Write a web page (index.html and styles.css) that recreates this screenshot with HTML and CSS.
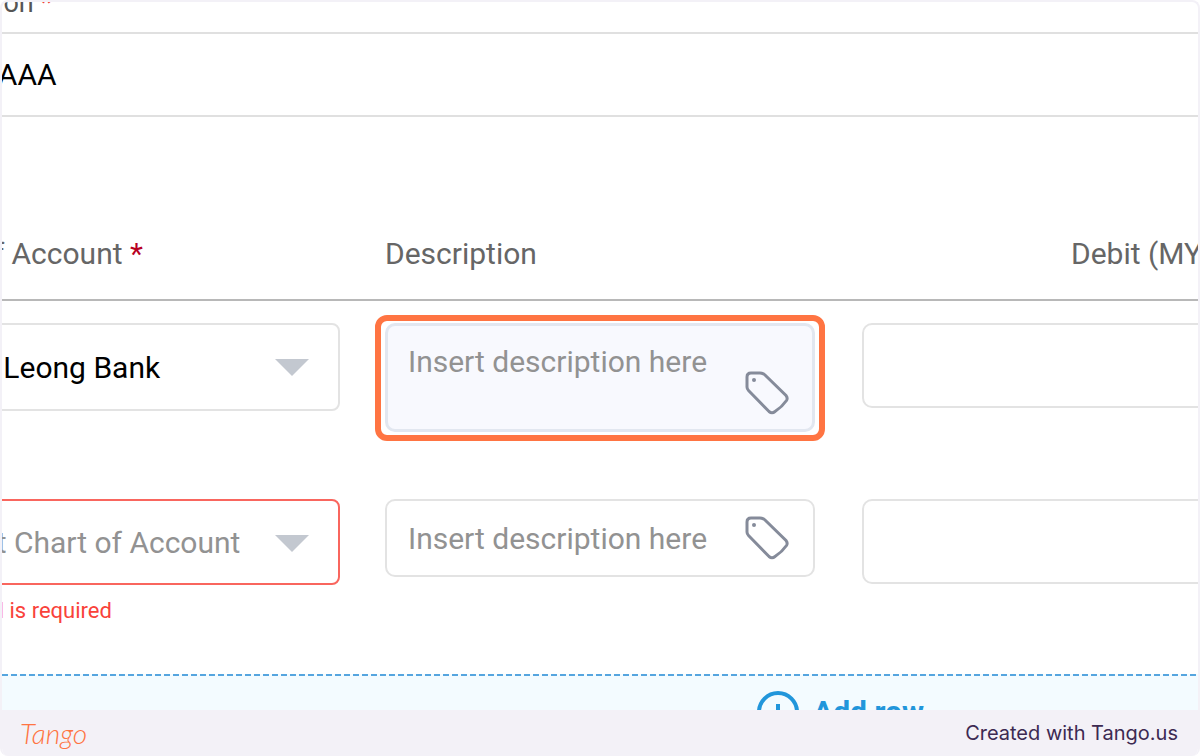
FILE: index.html
```html
<!DOCTYPE html>
<html lang="en">
<head>
    <meta charset="UTF-8" />
    <title>Journal entry</title>
    <link rel="stylesheet" href="styles.css">
</head>
<body>
    <div class="frame">
        <main class="sheet">
            <div class="top-field">
                <label for="topDescription">Description <span class="star">*</span></label>
                <input type="text" id="topDescription" value="AAAAAAAA" />
            </div>

            <table class="entries">
                <thead>
                    <tr>
                        <th class="col-account">Chart of Account <span class="star">*</span></th>
                        <th class="col-description">Description</th>
                        <th class="col-debit">Debit (MYR)</th>
                    </tr>
                </thead>
                <tbody>
                    <tr>
                        <td>
                            <div class="select-box tall">
                                <select aria-label="Chart of Account, row 1">
                                    <option>Hong Leong Bank</option>
                                </select>
                                <svg class="caret" viewBox="0 0 34 17"><path d="M0 0h34L17 17z" /></svg>
                            </div>
                        </td>
                        <td>
                            <div class="note active">
                                <textarea rows="2" aria-label="Description, row 1" placeholder="Insert description here"></textarea>
                                <svg class="tag" viewBox="0 0 44 44"><path d="M6 2Q2 2 2 6V16Q2 18 3.500 19.500L24 40.500Q27 43 30 40.500Q37 36 41.500 29.500Q43 27 41 24.500L20 4Q18 2 15 2Z" /><circle cx="9" cy="9" r="2" /></svg>
                                <span class="highlight"></span>
                            </div>
                        </td>
                        <td>
                            <input type="text" class="amount" aria-label="Debit, row 1" />
                        </td>
                    </tr>
                    <tr>
                        <td>
                            <div class="select-box invalid">
                                <select aria-label="Chart of Account, row 2">
                                    <option>Select Chart of Account</option>
                                </select>
                                <svg class="caret" viewBox="0 0 34 17"><path d="M0 0h34L17 17z" /></svg>
                            </div>
                            <p class="error">This field is required</p>
                        </td>
                        <td>
                            <div class="note">
                                <textarea rows="1" aria-label="Description, row 2" placeholder="Insert description here"></textarea>
                                <svg class="tag" viewBox="0 0 44 44"><path d="M6 2Q2 2 2 6V16Q2 18 3.500 19.500L24 40.500Q27 43 30 40.500Q37 36 41.500 29.500Q43 27 41 24.500L20 4Q18 2 15 2Z" /><circle cx="9" cy="9" r="2" /></svg>
                            </div>
                        </td>
                        <td>
                            <input type="text" class="amount" aria-label="Debit, row 2" />
                        </td>
                    </tr>
                </tbody>
            </table>
        </main>

        <div class="add-bar">
            <svg class="dashes" height="2"><line x1="0" y1="1" x2="100%" y2="1" /></svg>
            <button type="button" class="add-row">
                <svg class="plus" viewBox="0 0 44 44"><circle cx="22" cy="22" r="19" /><path d="M22 14v16M14 22h16" /></svg>
                Add row
            </button>
        </div>

        <footer class="footer">
            <a href="#" class="logo">Tango</a>
            <span>Created with Tango.us</span>
        </footer>
    </div>
</body>
</html>
```

FILE: styles.css
```css
* {
    box-sizing: border-box;
}

body {
    margin: 0;
    background-color: white;
    color: #666;
    font-family: Roboto, sans-serif;
    font-size: 30px;
}

input,
select,
textarea,
button {
    font: inherit;
}

.frame {
    border: 2px solid #f3f1f7;
    border-bottom: none;
    border-radius: 8px;
    overflow: hidden;
}

/* The sheet is panned past the left and right edges of the frame */
.sheet {
    margin: -24px -60px 0 -108px;
    padding-bottom: 20px;
}

.star {
    color: #b8001f;
}

.top-field label {
    display: block;
    padding-left: 3px;
    height: 54px;
    font-size: 27px;
    line-height: 50px;
    color: #555;
}

.top-field .star {
    color: #f04438;
}

.top-field input {
    display: block;
    width: 100%;
    height: 85px;
    padding: 0 6px;
    border: solid #e0e0e0;
    border-width: 2px 0;
    background: none;
    color: black;
}

.entries {
    width: 100%;
    border-collapse: collapse;
    table-layout: fixed;
}

th {
    height: 183px;
    padding: 119px 0 0;
    border-bottom: 2px solid #b8b8b8;
    font-weight: normal;
    line-height: 36px;
    text-align: left;
    vertical-align: top;
}

.col-account {
    width: 491px;
    padding-left: 2px;
}

.col-description {
    width: 477px;
}

.col-debit {
    padding-right: 27px;
    text-align: right;
}

td {
    height: 177px;
    padding: 22px 47px 0 0;
    vertical-align: top;
}

td:first-child {
    padding-left: 6px;
    padding-right: 45px;
}

td:last-child {
    padding-right: 0;
}

.select-box {
    position: relative;
}

.select-box select {
    display: block;
    width: 100%;
    height: 86px;
    padding: 0 22px;
    appearance: none;
    border: 2px solid #e3e3e3;
    border-radius: 8px;
    background-color: white;
    color: black;
}

.select-box.tall select {
    height: 88px;
}

.select-box.invalid select {
    border-color: #f9665e;
    color: #929292;
}

.caret {
    position: absolute;
    top: 36px;
    right: 31px;
    width: 34px;
    fill: #c3c8d0;
}

.error {
    margin: 8px 0 0;
    padding-left: 15px;
    font-size: 22px;
    line-height: 36px;
    color: #f9423a;
}

.note {
    position: relative;
}

.note textarea {
    display: block;
    width: 100%;
    height: 78px;
    padding: 20px 21px;
    border: 2px solid #e3e3e3;
    border-radius: 10px;
    background-color: white;
    line-height: 36px;
    resize: none;
    overflow: hidden;
}

.note.active textarea {
    height: 109px;
    border: 3px solid #e2e7f0;
    background-color: #f8f9fe;
    padding: 18px 20px;
}

.note textarea::placeholder {
    color: #929292;
}

.tag {
    position: absolute;
    right: 26px;
    bottom: 17px;
    width: 44px;
    fill: none;
    stroke: #858b9a;
    stroke-width: 3;
}

.tag circle {
    fill: #858b9a;
    stroke: none;
}

.highlight {
    position: absolute;
    inset: -8px -10px -9px;
    border: 6px solid #ff7442;
    border-radius: 12px;
    pointer-events: none;
}

.amount {
    display: block;
    width: 100%;
    height: 85px;
    padding: 0 22px;
    border: 2px solid #e3e3e3;
    border-radius: 10px;
}

.add-bar {
    height: 36px;
    overflow: hidden;
    background-color: #f3fbff;
}

.dashes {
    display: block;
    width: 100%;
    stroke: #55a5df;
    stroke-width: 2;
    stroke-dasharray: 6 3;
}

.add-row {
    display: flex;
    align-items: center;
    gap: 13px;
    margin: 0 auto;
    padding: 14px 0 0 480px;
    border: none;
    background: none;
    color: #2196db;
    font-weight: bold;
    line-height: 44px;
}

.plus {
    width: 44px;
    fill: none;
    stroke: #2196db;
    stroke-width: 4;
}

.footer {
    display: flex;
    justify-content: space-between;
    align-items: center;
    height: 46px;
    padding: 0 20px 0 18px;
    background-color: #f3f1f7;
    color: #3d2a52;
    font-family: Inter, sans-serif;
    font-size: 20px;
}

.logo {
    color: #ff7442;
    font-family: Lato, sans-serif;
    font-size: 28px;
    font-style: italic;
    font-weight: 300;
    text-decoration: none;
}
```
